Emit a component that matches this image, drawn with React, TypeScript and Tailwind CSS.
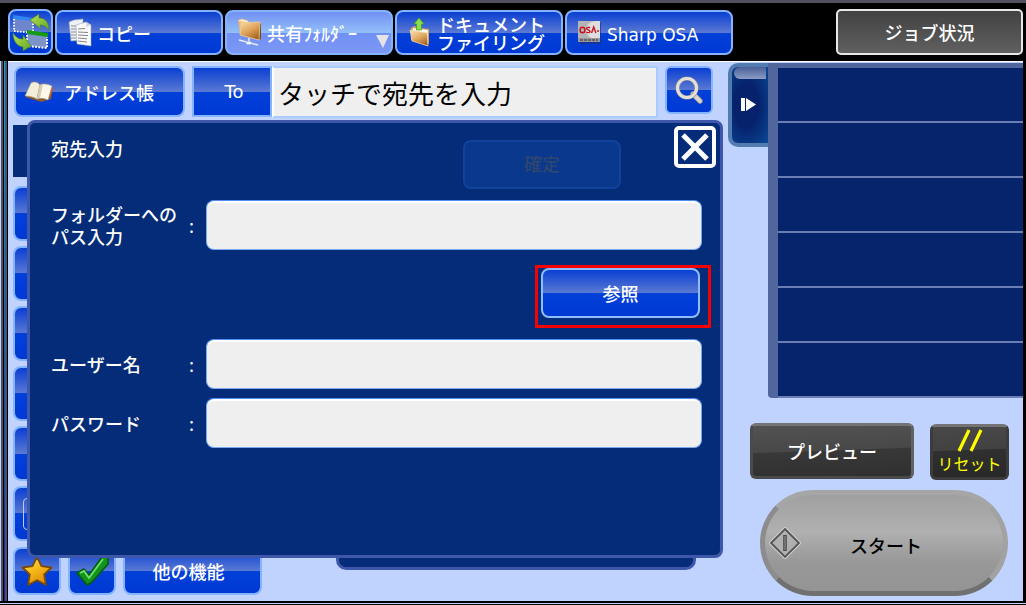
import type { ReactNode } from 'react';
import clsx from 'clsx';

const gloss =
  'bg-[linear-gradient(to_bottom,#0a3fd2_0%,#5a79d3_50%,#0240d8_50%,#0038d4_100%)] text-white';
const glossActive =
  'bg-[linear-gradient(to_bottom,#7290f2_0%,#92bff8_50%,#7090f4_50%,#7c98f6_100%)] text-white';

function SwapIcon() {
  return (
    <svg width="38" height="38" viewBox="0 0 38 38" className="shrink-0" aria-hidden="true">
      <defs>
        <linearGradient id="arrow" x1="0" y1="0" x2="1" y2="1">
          <stop offset="0" stopColor="#b8e04c" />
          <stop offset="1" stopColor="#5fa82c" />
        </linearGradient>
      </defs>
      <path d="M2 4l19 2v13L2 17z" fill="#6f86cc" />
      <path d="M1 2l20 3v3L1 6z" fill="#2f86f5" />
      <path d="M2 6v12l19 2V8" fill="none" stroke="#fff" strokeWidth="1.8" strokeDasharray="1.6 1.4" />
      <path d="M15 20l20 2v13l-20-2z" fill="#7c94c8" />
      <path d="M15 17l21 3v4l-21-3z" fill="#149a14" />
      <path d="M15 22v11l20 2V24" fill="none" stroke="#fff" strokeWidth="2" strokeDasharray="1.8 1.4" />
      <path d="M18 7l9-6v4c7 0 10 5 10 13-2-4-5-6-9-6l1 4z" fill="url(#arrow)" stroke="#4a7a2a" strokeWidth="0.6" />
      <path d="M19 33l-8 5v-4C4 33 1 27 1 20c3 4 5 6 10 6v-4z" fill="url(#arrow)" stroke="#4a7a2a" strokeWidth="0.6" />
    </svg>
  );
}

function CopyIcon() {
  return (
    <svg width="24" height="30" viewBox="0 0 24 30" aria-hidden="true">
      <path d="M1 4l5-2 9-1v21l-12 1z" fill="#eef1f5" stroke="#9aa5b5" strokeWidth="0.6" />
      <path d="M3 8h5M3 11h5M3 14h5M3 17h5M3 20h5" stroke="#7e828c" strokeWidth="0.9" />
      <path d="M8 7l10-3 5 3v21l-14-2z" fill="#fbfbfb" stroke="#9aa5b5" strokeWidth="0.6" />
      <path d="M18 4v5l5-2z" fill="#cfd6de" />
      <path d="M10 11l7-.500M10 14l10 .500M10 17l10 .600M10 20l9 .800M10 23l9 1" stroke="#777" strokeWidth="0.9" />
    </svg>
  );
}

function NetworkFolderIcon() {
  return (
    <svg width="26" height="29" viewBox="0 0 26 29" aria-hidden="true">
      <defs>
        <linearGradient id="network-folder" x1="0.2" y1="0" x2="0.8" y2="1">
          <stop offset="0" stopColor="#f6d49c" />
          <stop offset="0.5" stopColor="#dc9f54" />
          <stop offset="1" stopColor="#9a5a1c" />
        </linearGradient>
      </defs>
      <path d="M1 2l3-1 6 1 1 2-2 14-6-3z" fill="#e8b874" />
      <path d="M1 3l4-2 6 2 1 2z" fill="#fae6c0" />
      <path d="M22 4l2 2v15l-2 1z" fill="#7c4a18" />
      <path d="M4 5l19-1-1 18L3 17z" fill="url(#network-folder)" stroke="#f3cf93" strokeWidth="0.8" />
      <path d="M12 20v5M2 22l19 5" stroke="#e6eefa" strokeWidth="1.5" />
      <ellipse cx="12" cy="25" rx="3" ry="1.6" fill="#f8fafc" stroke="#98a8c8" strokeWidth="0.5" />
    </svg>
  );
}

function FilingIcon() {
  return (
    <svg width="22" height="29" viewBox="0 0 22 29" aria-hidden="true">
      <defs>
        <linearGradient id="filing-folder" x1="0.2" y1="0" x2="0.8" y2="1">
          <stop offset="0" stopColor="#f8dcae" />
          <stop offset="0.5" stopColor="#e0a65e" />
          <stop offset="1" stopColor="#9c5c20" />
        </linearGradient>
      </defs>
      <path d="M2 10l3-2 5 2 10 1v14l-2 3-16-6z" fill="#d8a25c" />
      <path d="M4 10l15 2-1 12L3 20z" fill="#fffaf0" />
      <path d="M1 12l17 3 1 13L3 23z" fill="url(#filing-folder)" stroke="#f8dcae" strokeWidth="0.7" />
      <path d="M10 0l5 6h-2.500v6h-5V6H5z" fill="#8be04a" stroke="#3f9a1e" strokeWidth="0.7" />
    </svg>
  );
}

function OsaIcon() {
  return (
    <svg width="24" height="24" viewBox="0 0 24 24" aria-hidden="true">
      <rect x="2" y="2" width="21" height="21" fill="#1c2f78" opacity="0.6" />
      <rect width="22" height="21" fill="#b4b4b6" />
      <path d="M22 0v18h-5a9 9 0 0 1 0-18z" fill="#dedede" />
      <rect y="17" width="22" height="4" fill="#97979a" />
      <ellipse cx="4.5" cy="9" rx="2.4" ry="2.8" fill="none" stroke="#c8141e" strokeWidth="1.5" />
      <path d="M12 7c-1-1.2-3.6-.8-3.4.7.2 1.4 3.4 1 3.4 2.7 0 1.500-2.800 1.600-3.700.4M13.500 12l2.200-6 2.200 6" fill="none" stroke="#c8141e" strokeWidth="1.400" />
      <circle cx="20" cy="10" r="1" fill="#c8141e" />
      <path d="M2 19h18" stroke="#333" strokeWidth="1.200" strokeDasharray="3 1" />
    </svg>
  );
}

function BookIcon() {
  return (
    <svg width="30" height="22" viewBox="0 0 30 22" aria-hidden="true">
      <path d="M1 16l13 4 3 1 10-3 2-11-2-1z" fill="#8a5a34" />
      <path d="M25 6l4 1-2 6-2 4z" fill="#d9562c" />
      <path d="M1 15L7 2c3-2 7-1 9 2l-3 14c-3-2-8-3-12-3z" fill="#f3eddc" stroke="#a89872" strokeWidth="0.600" />
      <path d="M13 18L16 4c3-2 8-1 12 1l-4 14c-4-2-8-2-11-1z" fill="#fdf8ea" stroke="#a89872" strokeWidth="0.600" />
      <path d="M13 18L16 4l3-1-3 14z" fill="#d6cdb0" />
    </svg>
  );
}

function SearchIcon() {
  return (
    <svg width="28" height="28" viewBox="0 0 28 28" aria-hidden="true">
      <path d="M18 18l7 7" stroke="#8c8c8c" strokeWidth="5.500" strokeLinecap="round" />
      <path d="M18 18l7 7" stroke="#d8d5d0" strokeWidth="4" strokeLinecap="round" />
      <circle cx="12" cy="12" r="9.500" fill="none" stroke="#8c8c8c" strokeWidth="4.200" />
      <circle cx="12" cy="12" r="9.500" fill="none" stroke="#e4e1dc" strokeWidth="3" />
    </svg>
  );
}

function StarIcon() {
  return (
    <svg width="32" height="32" viewBox="0 0 32 32" aria-hidden="true">
      <defs>
        <linearGradient id="star" x1="0" y1="0" x2="0.600" y2="1">
          <stop offset="0" stopColor="#fff7a8" />
          <stop offset="0.450" stopColor="#f8c01e" />
          <stop offset="1" stopColor="#e08a08" />
        </linearGradient>
      </defs>
      <path d="M16 2l4.500 9.200 10 1.300-7.300 7 1.800 10.500-9-4.800L7 30l1.800-10.500-7.300-7 10-1.300z" fill="url(#star)" stroke="#7a4a08" strokeWidth="1.800" strokeLinejoin="round" />
    </svg>
  );
}

function CheckIcon() {
  return (
    <svg width="34" height="32" viewBox="0 0 34 32" aria-hidden="true">
      <path d="M2 18l7-4 5 6L27 2l6-1v8L17 27l-5 3z" fill="#14941c" stroke="#075c0c" strokeWidth="1.600" strokeLinejoin="round" />
      <path d="M5 18l4-2 5 7L28 4" fill="none" stroke="#6be06c" strokeWidth="1.800" />
    </svg>
  );
}

function StartIcon() {
  return (
    <svg width="32" height="32" viewBox="0 0 32 32" className="shrink-0" aria-hidden="true">
      <path d="M16 2l14 14-14 14L2 16z" fill="#b4b4b4" stroke="#d0d0d0" strokeWidth="4" />
      <path d="M16 2l14 14-14 14L2 16z" fill="#b0b0b0" stroke="#555" strokeWidth="1.800" />
      <path d="M16 8v16" stroke="#4a4a4a" strokeWidth="3.600" />
      <path d="M16 9v14" stroke="#999" strokeWidth="1" />
    </svg>
  );
}

function HeaderTab({ icon, active, children }: { icon: ReactNode; active?: boolean; children: ReactNode }) {
  return (
    <button
      type="button"
      className={clsx(
        'relative flex h-[45px] w-[168px] shrink items-center gap-1 overflow-hidden rounded-lg border-2 border-[#84b4ff] pl-2.5 text-left whitespace-nowrap',
        active ? glossActive : gloss,
      )}
    >
      <span className="flex w-[26px] shrink-0 justify-center">{icon}</span>
      {children}
      {active && (
        <svg className="absolute right-0.5 bottom-1" width="13" height="14" viewBox="0 0 13 14" aria-hidden="true">
          <path d="M0 0h13L7 13z" fill="#e4e4e6" />
        </svg>
      )}
    </button>
  );
}

function Field({ id, label, type = 'text' }: { id: string; label: ReactNode; type?: string }) {
  return (
    <div className="flex h-[50px] items-center">
      <label htmlFor={id} className="flex w-[155px] shrink-0 items-center justify-between pr-3">
        <span className="leading-[22px]">{label}</span>
        <span className="font-normal">:</span>
      </label>
      <input
        id={id}
        type={type}
        className="h-full min-w-0 flex-1 rounded-lg border border-[#79a9f5] border-t-[#4f8df0] bg-[#efefef] px-3 text-black shadow-[inset_0_2px_0_#fff] outline-none"
      />
    </div>
  );
}

const sideItems = ['項目1', '項目2', '項目3', '項目4', '項目5', '項目6'];
const jobRows = [1, 2, 3, 4, 5, 6];

function AddressDialog() {
  return (
    <section
      role="dialog"
      aria-labelledby="dialog-title"
      className="absolute top-[58px] right-0 left-[19px] rounded-lg border-[3px] border-[#3e57aa] bg-[#042c78] pr-[18px] pb-[107px] pl-[21px]"
    >
      <div className="mb-[11px] flex items-start">
        <h1 id="dialog-title" className="flex-1 pt-3 leading-[26px]">
          宛先入力
        </h1>
        <button
          type="button"
          disabled
          className="mt-[17px] mr-[53px] h-[49px] w-[158px] rounded-lg border-2 border-[#11429c] bg-[#09388c] pb-1 text-[#2f4672]"
        >
          確定
        </button>
        <button
          type="button"
          aria-label="閉じる"
          className="mt-[3px] -mr-[14px] flex size-[42px] items-center justify-center rounded-[5px] border-4 border-white"
        >
          <svg width="30" height="30" viewBox="0 0 30 30" className="shrink-0" aria-hidden="true">
            <path d="M3 3l24 24M27 3L3 27" stroke="#fff" strokeWidth="5" />
          </svg>
        </button>
      </div>
      <Field
        id="folder-path"
        label={
          <>
            フォルダーへの
            <br />
            パス入力
          </>
        }
      />
      <div className="mt-[15px] mb-[11px] flex justify-end">
        <div className="-mr-[9px] border-[3px] border-[#f60000] pr-2 pb-[7px] pl-[3px]">
          <button type="button" className={clsx('h-[50px] w-[159px] rounded-lg border-2 border-[#8fbcff]', gloss)}>
            参照
          </button>
        </div>
      </div>
      <Field id="user-name" label="ユーザー名" />
      <div className="h-[9px]" />
      <Field id="password" label="パスワード" type="password" />
    </section>
  );
}

export default function App() {
  return (
    <div className="flex min-h-screen flex-col border-t-[3px] border-[#50505f] bg-black font-['Noto_Sans_CJK_JP','Noto_Sans',sans-serif] text-[18px] leading-[18px] font-medium text-white">
      <header className="flex h-[58px] items-start justify-between pt-1.5 pr-[3px] pl-2">
        <nav className="flex items-end gap-0.5">
          <button
            type="button"
            aria-label="モード切替"
            className={clsx('flex h-[46px] w-[45px] shrink-0 items-center justify-center rounded-lg border-2 border-[#84b4ff]', gloss)}
          >
            <SwapIcon />
          </button>
          <HeaderTab icon={<CopyIcon />}>コピー</HeaderTab>
          <HeaderTab icon={<NetworkFolderIcon />} active>
            共有ﾌｫﾙﾀﾞｰ
          </HeaderTab>
          <HeaderTab icon={<FilingIcon />}>
            <span>
              ドキュメント
              <br />
              ファイリング
            </span>
          </HeaderTab>
          <HeaderTab icon={<OsaIcon />}>
            <span className="pt-1 font-['DejaVu_Sans',sans-serif] text-[17px] font-normal">Sharp OSA</span>
          </HeaderTab>
        </nav>
        <button
          type="button"
          className="h-[46px] w-[187px] rounded-[5px] border-2 border-[#e8e8e8] bg-linear-to-b from-[#424242] to-[#606060]"
        >
          ジョブ状況
        </button>
      </header>

      <div className="flex flex-1">
        <div className="flex w-2 shrink-0" aria-hidden="true">
          <div className="w-px bg-[#c0d3ff]" />
          <div className="w-0.5 bg-[#50505f]" />
          <div className="w-px bg-black" />
          <div className="w-px bg-linear-to-b from-[#00a8f0] to-[#1818b0]" />
          <div className="w-0.5 bg-[#50505f]" />
          <div className="w-px bg-black" />
        </div>

        <main className="flex flex-1 border-t border-white bg-[#c0d3ff]">
          <div className="relative min-w-0 flex-1 pl-1.5">
            <div className="mt-1 flex h-[52px] items-start">
              <button
                type="button"
                className={clsx('mr-[7px] flex h-[51px] w-[171px] shrink-0 items-center gap-2.5 rounded-lg border-2 border-[#84b4ff] pl-2', gloss)}
              >
                <BookIcon />
                アドレス帳
              </button>
              <button
                type="button"
                className={clsx("h-[51px] w-[80px] shrink-0 border-2 border-[#84b4ff] pl-1 font-['DejaVu_Sans',sans-serif] font-normal", gloss)}
              >
                To
              </button>
              <input
                type="text"
                aria-label="宛先"
                placeholder="タッチで宛先を入力"
                className="h-[52px] min-w-0 flex-1 border-2 border-[#a8ccff] border-l-white bg-[#efefef] pl-1 text-[26px] font-normal text-black outline-none placeholder:text-black"
              />
              <button
                type="button"
                aria-label="検索"
                className={clsx('mr-[10px] ml-[7px] flex size-[48px] shrink-0 items-center justify-center rounded-md border-2 border-[#84b4ff]', gloss)}
              >
                <SearchIcon />
              </button>
            </div>

            <div className="-ml-px flex">
              <div className="w-[100px]">
                <div className="mt-[7px] mb-[9px] h-[52px] bg-[#042c78]" />
                <ul className="flex flex-col gap-[5px]">
                  {sideItems.map((item, i) => (
                    <li key={item}>
                      <button
                        type="button"
                        aria-label={item}
                        className={clsx('flex h-[55px] w-full items-center rounded-lg border-2 border-[#84b4ff] pl-2', gloss)}
                      >
                        {i === 5 && <span className="h-8 w-12 rounded-sm border border-[#c8c8d0]" />}
                      </button>
                    </li>
                  ))}
                </ul>
              </div>
              <div className="mt-10 mr-[27px] -mb-[29px] ml-auto w-[360px] rounded-[10px] border-[3px] border-[#3e57aa] bg-[#042c78]" />
            </div>

            <div className="mt-1.5 -ml-px flex gap-[7px]">
              <button
                type="button"
                aria-label="お気に入り"
                className={clsx('flex size-[48px] items-center justify-center rounded-lg border-2 border-[#84b4ff]', gloss)}
              >
                <StarIcon />
              </button>
              <button
                type="button"
                aria-label="確認"
                className={clsx('flex size-[48px] items-center justify-center rounded-lg border-2 border-[#84b4ff]', gloss)}
              >
                <CheckIcon />
              </button>
              <button type="button" className={clsx('h-[48px] w-[139px] rounded-lg border-2 border-[#84b4ff] pr-2', gloss)}>
                他の機能
              </button>
            </div>

            <AddressDialog />
          </div>

          <aside className="ml-[5px] flex w-[295px] shrink-0 flex-col">
            <div className="flex items-start">
              <button
                type="button"
                aria-label="パネルを閉じる"
                className="mt-px flex h-[84px] w-10 flex-col rounded-l-[10px] border-4 border-r-0 border-[#527cb0] bg-[radial-gradient(ellipse_at_40%_50%,#06226c_40%,#0a4896_100%)] pl-0.5"
              >
                <span className="h-3 w-8 rounded-l-full bg-linear-to-b from-[#4a5f98] to-[#8c9cc4]" />
                <svg className="mt-[18px] ml-1.5" width="17" height="15" viewBox="0 0 17 15" aria-hidden="true">
                  <path d="M1 1h4v13H1zM6 1l10 6.500L6 14z" fill="#fff" />
                </svg>
              </button>
              <ul className="mt-px min-w-0 flex-1 rounded-bl-sm border-t-[5px] border-l-[10px] border-[#50669c] bg-[#06246c]">
                {jobRows.map((row) => (
                  <li key={row} className="h-[55px] border-b-2 border-[#6a7eb4]" />
                ))}
              </ul>
            </div>

            <div className="mt-[25px] flex items-start justify-between pr-3.5 pl-[22px]">
              <button
                type="button"
                className="h-[56px] w-[164px] rounded-md border-[3px] border-[#4a4a4a] border-t-[#747474] border-r-[#626262] bg-[linear-gradient(178deg,#525252_0%,#484848_48%,#383838_50%,#303030_100%)]"
              >
                プレビュー
              </button>
              <button
                type="button"
                className="mt-px flex h-[56px] w-[79px] flex-col items-center rounded-md border-[3px] border-[#3c3c3c] border-t-[#747474] bg-[linear-gradient(178deg,#484848_0%,#424242_45%,#303030_47%,#282828_100%)] text-[16px] font-normal text-[#ffff00]"
              >
                <svg className="mt-0.5 mb-0.5 shrink-0" width="26" height="23" viewBox="0 0 26 23" aria-hidden="true">
                  <path d="M2 22L12 1M14 22L24 1" stroke="#ff0" strokeWidth="3.200" />
                </svg>
                リセット
              </button>
            </div>

            <div className="mt-2.5 pr-[15px] pl-8">
              <button
                type="button"
                className="flex h-[106px] w-full items-center rounded-full border-[5px] border-[#8c8c8c] border-t-[#a6a6a6] border-r-[#a2a2a2] border-b-[#707070] bg-[linear-gradient(to_bottom,#a0a0a0_0%,#b0b0b0_38%,#989898_70%,#949494_100%)] pl-1 text-black"
              >
                <StartIcon />
                <span className="flex-1 pt-1 pr-8 text-center">スタート</span>
              </button>
            </div>
          </aside>
        </main>
        <div className="w-[3px] shrink-0 bg-black" />
      </div>
      <div className="h-1 border-b border-black" aria-hidden="true">
        <div className="mt-0.5 h-px bg-[#c0d3ff]" />
      </div>
    </div>
  );
}
